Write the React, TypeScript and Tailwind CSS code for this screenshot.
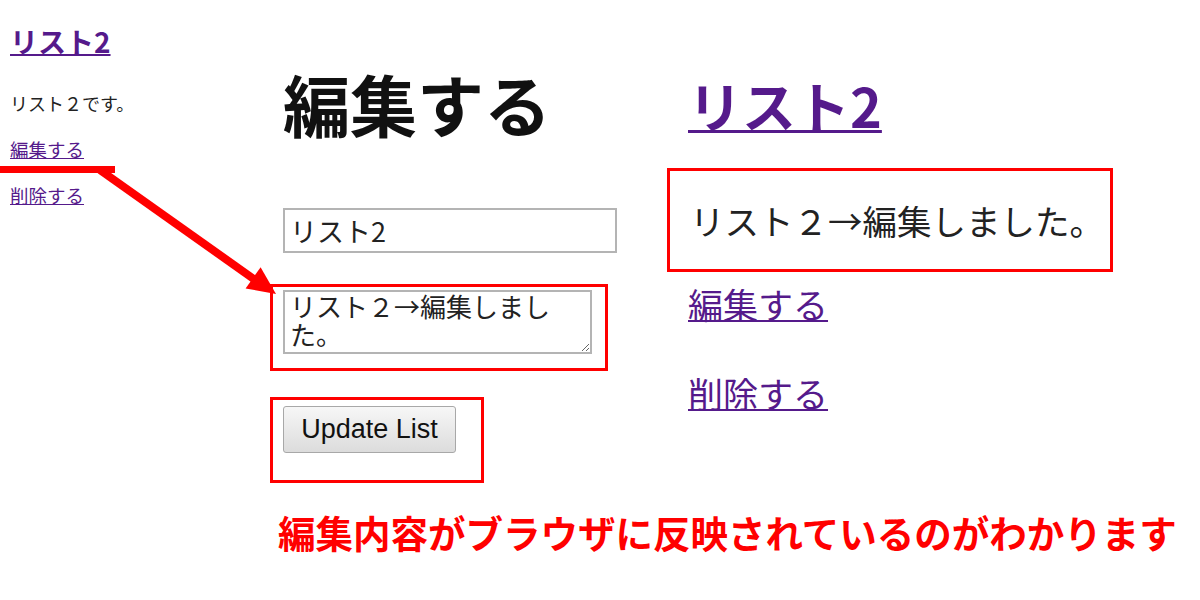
import { useState } from 'react';

const jp = { fontFamily: '"Noto Sans CJK JP", "Noto Sans", sans-serif' };

const App = () => {
  const [title, setTitle] = useState('リスト2');
  const [body, setBody] = useState('リスト２→編集しました。');

  return (
    <div className="relative w-[1200px] h-[600px] bg-white text-black overflow-hidden flex" style={jp}>
      {/* sidebar: current list entry */}
      <aside className="w-[270px] shrink-0 pl-[10px]">
        <h2 className="mt-[25px] text-[28px] leading-[32px] font-bold">
          <a href="#" className="text-[#551a8b] underline decoration-2">リスト2</a>
        </h2>
        <p className="mt-[34px] text-[18px] leading-[24px] text-[#222]">リスト２です。</p>
        <p className="mt-[22px] text-[18.5px] leading-[24px]">
          <a href="#" className="text-[#551a8b] underline">編集する</a>
        </p>
        <p className="mt-[22px] text-[18.5px] leading-[24px]">
          <a href="#" className="text-[#551a8b] underline">削除する</a>
        </p>
      </aside>

      <main className="flex-1 flex flex-col">
        <div className="flex">
          {/* edit form */}
          <section className="w-[397px] shrink-0 flex flex-col items-start">
            <h1 className="mt-[63px] ml-[13px] text-[67px] leading-[80px] font-bold text-[#111]">編集する</h1>
            <input
              className="mt-[65px] ml-[13px] w-[334px] h-[45px] border-2 border-[#b4b4b4] px-[5px] text-[27px] text-[#222] outline-none"
              value={title}
              onChange={(e) => setTitle(e.target.value)}
            />
            <div className="mt-[31px] w-[338px] h-[87px] border-[3px] border-[#ff0000] pl-[10px] pt-[3px]">
              <textarea
                className="w-[309px] h-[64px] border-2 border-[#b4b4b4] pl-[5px] pr-[22px] text-[26px] leading-[28px] text-[#222] outline-none"
                value={body}
                onChange={(e) => setBody(e.target.value)}
              />
            </div>
            <div className="mt-[26px] w-[214px] h-[86px] border-[3px] border-[#ff0000] pl-[10px] pt-[6px]">
              <button
                className="w-[173px] h-[47px] rounded-[3px] border border-[#a8a8a8] bg-gradient-to-b from-[#f7f7f7] to-[#dcdcdc] text-[27px] text-[#111]"
                style={{ fontFamily: '"Liberation Sans", Arial, sans-serif' }}
              >
                Update List
              </button>
            </div>
          </section>

          {/* rendered result */}
          <section className="flex-1 flex flex-col items-start">
            <h2 className="mt-[74px] ml-[21px] text-[54px] leading-[62px] font-bold">
              <a href="#" className="text-[#551a8b] underline decoration-[3px]">リスト2</a>
            </h2>
            <div className="mt-[32px] w-[446px] h-[104px] border-[3px] border-[#ff0000] pl-[20px] flex items-center">
              <p className="text-[34.5px] leading-[40px] text-[#222]">リスト２→編集しました。</p>
            </div>
            <p className="mt-[12px] ml-[21px] text-[35px] leading-[40px]">
              <a href="#" className="text-[#551a8b] underline decoration-2">編集する</a>
            </p>
            <p className="mt-[49px] ml-[21px] text-[35px] leading-[40px]">
              <a href="#" className="text-[#551a8b] underline decoration-2">削除する</a>
            </p>
          </section>
        </div>

        <p className="mt-[27px] ml-[8px] text-[37.5px] leading-[44px] font-bold text-[#ff0000] whitespace-nowrap">
          編集内容がブラウザに反映されているのがわかります
        </p>
      </main>

      {/* red pointer from sidebar link to the textarea */}
      <svg className="absolute inset-0 pointer-events-none" width="1200" height="600" viewBox="0 0 1200 600">
        <rect x="0" y="166" width="115" height="7" fill="#ff0000" />
        <line x1="100" y1="170" x2="258" y2="282" stroke="#ff0000" strokeWidth="8" />
        <polygon points="276,294 245.6,288.4 260.6,267.2" fill="#ff0000" />
      </svg>
    </div>
  );
};

export default App;
